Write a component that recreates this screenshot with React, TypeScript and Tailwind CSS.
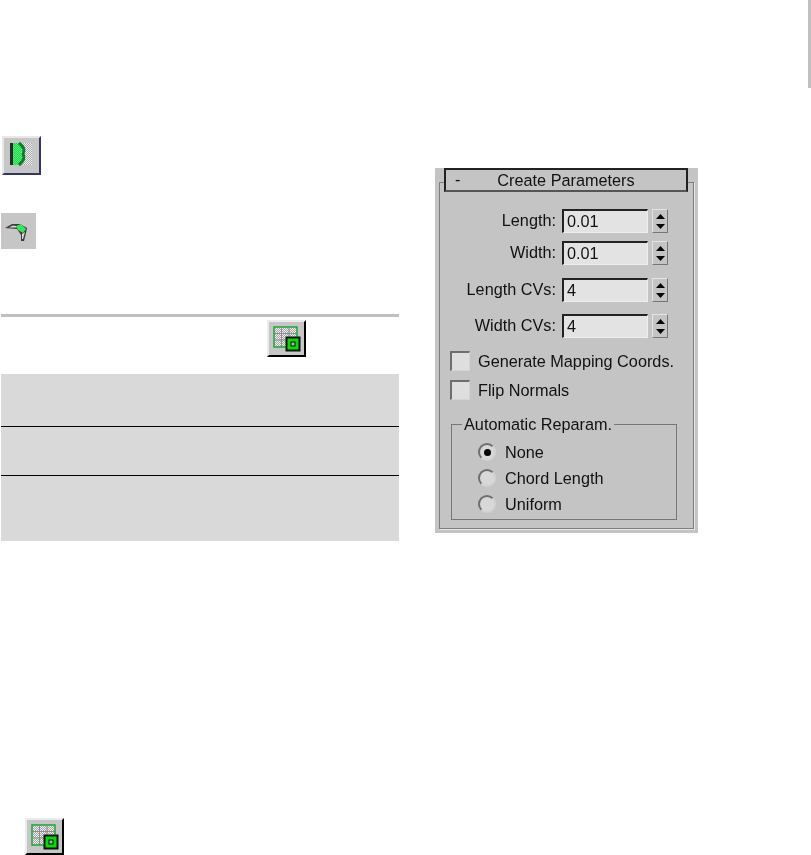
const FONT = "font-['Liberation_Sans',Arial,sans-serif]"

function Dots({ id, a, b }: { id: string; a: string; b: string }) {
  return (
    <pattern id={id} width="2" height="2" patternUnits="userSpaceOnUse">
      <rect width="2" height="2" fill={a} />
      <rect width="1" height="1" fill={b} />
      <rect x="1" y="1" width="1" height="1" fill={b} />
    </pattern>
  )
}

function GridIcon({ id }: { id: string }) {
  return (
    <div className="h-[37px] w-[39px] border-2 border-t-[#ececec] border-l-[#ececec] border-r-black border-b-black bg-[#c6c6c6] blur-[0.3px]">
      <svg width="35" height="33" viewBox="0 0 35 33" className="block">
        <defs><Dots id={id} a="#f0f0f0" b="#a4a4a4" /></defs>
        <rect x="5" y="5" width="23" height="20" fill={`url(#${id})`} />
        {[12.5, 20].map(x => <line key={x} x1={x} y1="6" x2={x} y2="25" stroke="#8c8c8c" />)}
        {[11.5, 18].map(y => <line key={y} x1="6" y1={y} x2="27" y2={y} stroke="#8c8c8c" />)}
        <rect x="5" y="5" width="23" height="20" fill="none" stroke="#18a838" strokeWidth="1.5" />
        <rect x="17.5" y="15.5" width="13" height="13" fill="#00e000" stroke="#101010" strokeWidth="2" />
        <rect x="22" y="20" width="4" height="4" fill="#b0b0b0" stroke="#111111" />
      </svg>
    </div>
  )
}

function BoundaryIcon() {
  return (
    <div className="ml-px h-[39px] w-[39px] border-2 border-t-[#e8e8e8] border-l-[#e8e8e8] border-r-[#35356b] border-b-[#35356b] bg-[#c6c6c6] blur-[0.3px]">
      <svg width="35" height="35" viewBox="0 0 35 35" className="block">
        <defs>
          <Dots id="bnd-green" a="#10e040" b="#60e880" />
          <Dots id="bnd-grey" a="#f0f0f0" b="#a8a8a8" />
        </defs>
        <rect x="16" y="5" width="12" height="22" fill="url(#bnd-grey)" />
        <rect x="6" y="5" width="3" height="22" fill="#2a2a2a" />
        <path d="M9 5 H15 Q20 9 17 15 Q20 21 15 27 H9 Z" fill="url(#bnd-green)" />
        <path d="M15 5 Q22 10 19 16 Q22 21 15 27" fill="none" stroke="#08802a" strokeWidth="3" />
      </svg>
    </div>
  )
}

function CornerIcon() {
  return (
    <div className="h-[36px] w-[35px] bg-[#c6c6c6] blur-[0.3px]">
      <svg width="35" height="36" viewBox="0 0 35 36" className="block">
        <path d="M4 15 L11 11 L19 11 L26 15 L25 20 L23 28 L20 28 L20 22 L16 16 Z" fill="#3c3c3c" />
        <path d="M8 14.5 L12 12.5 L15 13 L16 14.5 Z M21 21 L24 19 L22 26 L21 26 Z" fill="#d8d8d8" />
        <path d="M15 13 L20 11 L25 16 L22 20 L17 17 Z" fill="#33e85a" />
      </svg>
    </div>
  )
}

function SpinnerField({ label, value }: { label: string; value: string }) {
  return (
    <div className="flex h-6 items-center">
      <span className="w-[121px] pb-[2px] pr-[6px] text-right">{label}</span>
      <div className="h-6 w-[86px] border-t-2 border-l-2 border-t-[#222222] border-l-[#222222] border-r border-b border-r-[#eeeeee] border-b-[#eeeeee] bg-[#e3e3e3] pl-[3px] leading-[20px]">
        {value}
      </div>
      <div className="ml-[4px] flex h-6 w-[16px] flex-col items-center justify-center gap-[5px] border border-t-[#e4e4e4] border-l-[#e4e4e4] border-r-[#777777] border-b-[#777777]">
        <svg width="9" height="5" viewBox="0 0 9 5" className="block"><path d="M4.5 0 L9 5 H0 Z" fill="#000000" /></svg>
        <svg width="9" height="5" viewBox="0 0 9 5" className="block"><path d="M0 0 H9 L4.5 5 Z" fill="#000000" /></svg>
      </div>
    </div>
  )
}

function Check({ label }: { label: string }) {
  return (
    <div className="flex h-5 items-center gap-[8px]">
      <div className="h-5 w-5 border-t-2 border-l-2 border-t-[#6e6e6e] border-l-[#6e6e6e] border-r border-b border-r-[#d4d4d4] border-b-[#d4d4d4] bg-[#dedede]" />
      <span>{label}</span>
    </div>
  )
}

function Radio({ label, on }: { label: string; on?: boolean }) {
  return (
    <div className="flex h-[26px] items-center gap-[9px]">
      <div className="flex h-[18px] w-[18px] items-center justify-center rounded-full border-2 border-t-[#6e6e6e] border-l-[#6e6e6e] border-r-[#d2d2d2] border-b-[#d2d2d2] bg-[#d8d8d8]">
        {on && <div className="h-[7px] w-[7px] rounded-full bg-black" />}
      </div>
      <span>{label}</span>
    </div>
  )
}

function ParamsPanel() {
  return (
    <div className={`relative ml-[36px] mt-[168px] h-[365px] w-[263px] bg-[#c4c4c4] text-[16.25px] leading-5 text-[#111111] blur-[0.3px] ${FONT}`}>
      {/* rollout frame */}
      <div className="absolute inset-x-[4px] bottom-[4px] top-[14px] border border-[#7e7e7e] shadow-[1px_1px_0_#e6e6e6]" />
      <div className="relative mx-[9px] flex h-6 w-[244px] items-center border-2 border-[#222222] border-b-[#555555] bg-[#c4c4c4]">
        <span className="absolute left-[9px] top-[-1px]">-</span>
        <span className="w-full text-center">Create Parameters</span>
      </div>
      <div className="relative flex flex-col pl-[6px] pt-[17px]">
        <div className="flex flex-col gap-2">
          <SpinnerField label="Length:" value="0.01" />
          <SpinnerField label="Width:" value="0.01" />
        </div>
        <div className="mt-[13px] flex flex-col gap-3">
          <SpinnerField label="Length CVs:" value="4" />
          <SpinnerField label="Width CVs:" value="4" />
        </div>
        <div className="ml-[9px] mt-[13px] flex flex-col gap-[9px]">
          <Check label="Generate Mapping Coords." />
          <Check label="Flip Normals" />
        </div>
        <div className="relative ml-[10px] mt-[24px] h-[96px] w-[226px] border border-[#777777] pl-[26px] pt-[14px]">
          <span className="absolute left-[10px] top-[-11px] bg-[#c4c4c4] px-[2px]">Automatic Reparam.</span>
          <Radio label="None" on />
          <Radio label="Chord Length" />
          <Radio label="Uniform" />
        </div>
      </div>
    </div>
  )
}

export default function App() {
  return (
    <div className="flex h-[855px] w-[811px] overflow-hidden bg-white">
      <div className="ml-px flex w-[398px] flex-col pt-[136px]">
        <BoundaryIcon />
        <div className="mt-[38px]"><CornerIcon /></div>
        <div className="mt-[65px] h-[3px] bg-[#c0c0c0]" />
        <div className="ml-[266px] mt-[3px]"><GridIcon id="grid-top" /></div>
        <div className="mt-[17px] flex h-[167px] flex-col bg-[#d9d9d9]">
          <div className="h-[53px] border-b border-black" />
          <div className="h-[49px] border-b border-black" />
        </div>
        <div className="ml-[24px] mt-[277px]"><GridIcon id="grid-bottom" /></div>
      </div>
      <ParamsPanel />
      <div className="ml-auto h-[88px] w-[3px] bg-[#c0c0c0]" />
    </div>
  )
}
